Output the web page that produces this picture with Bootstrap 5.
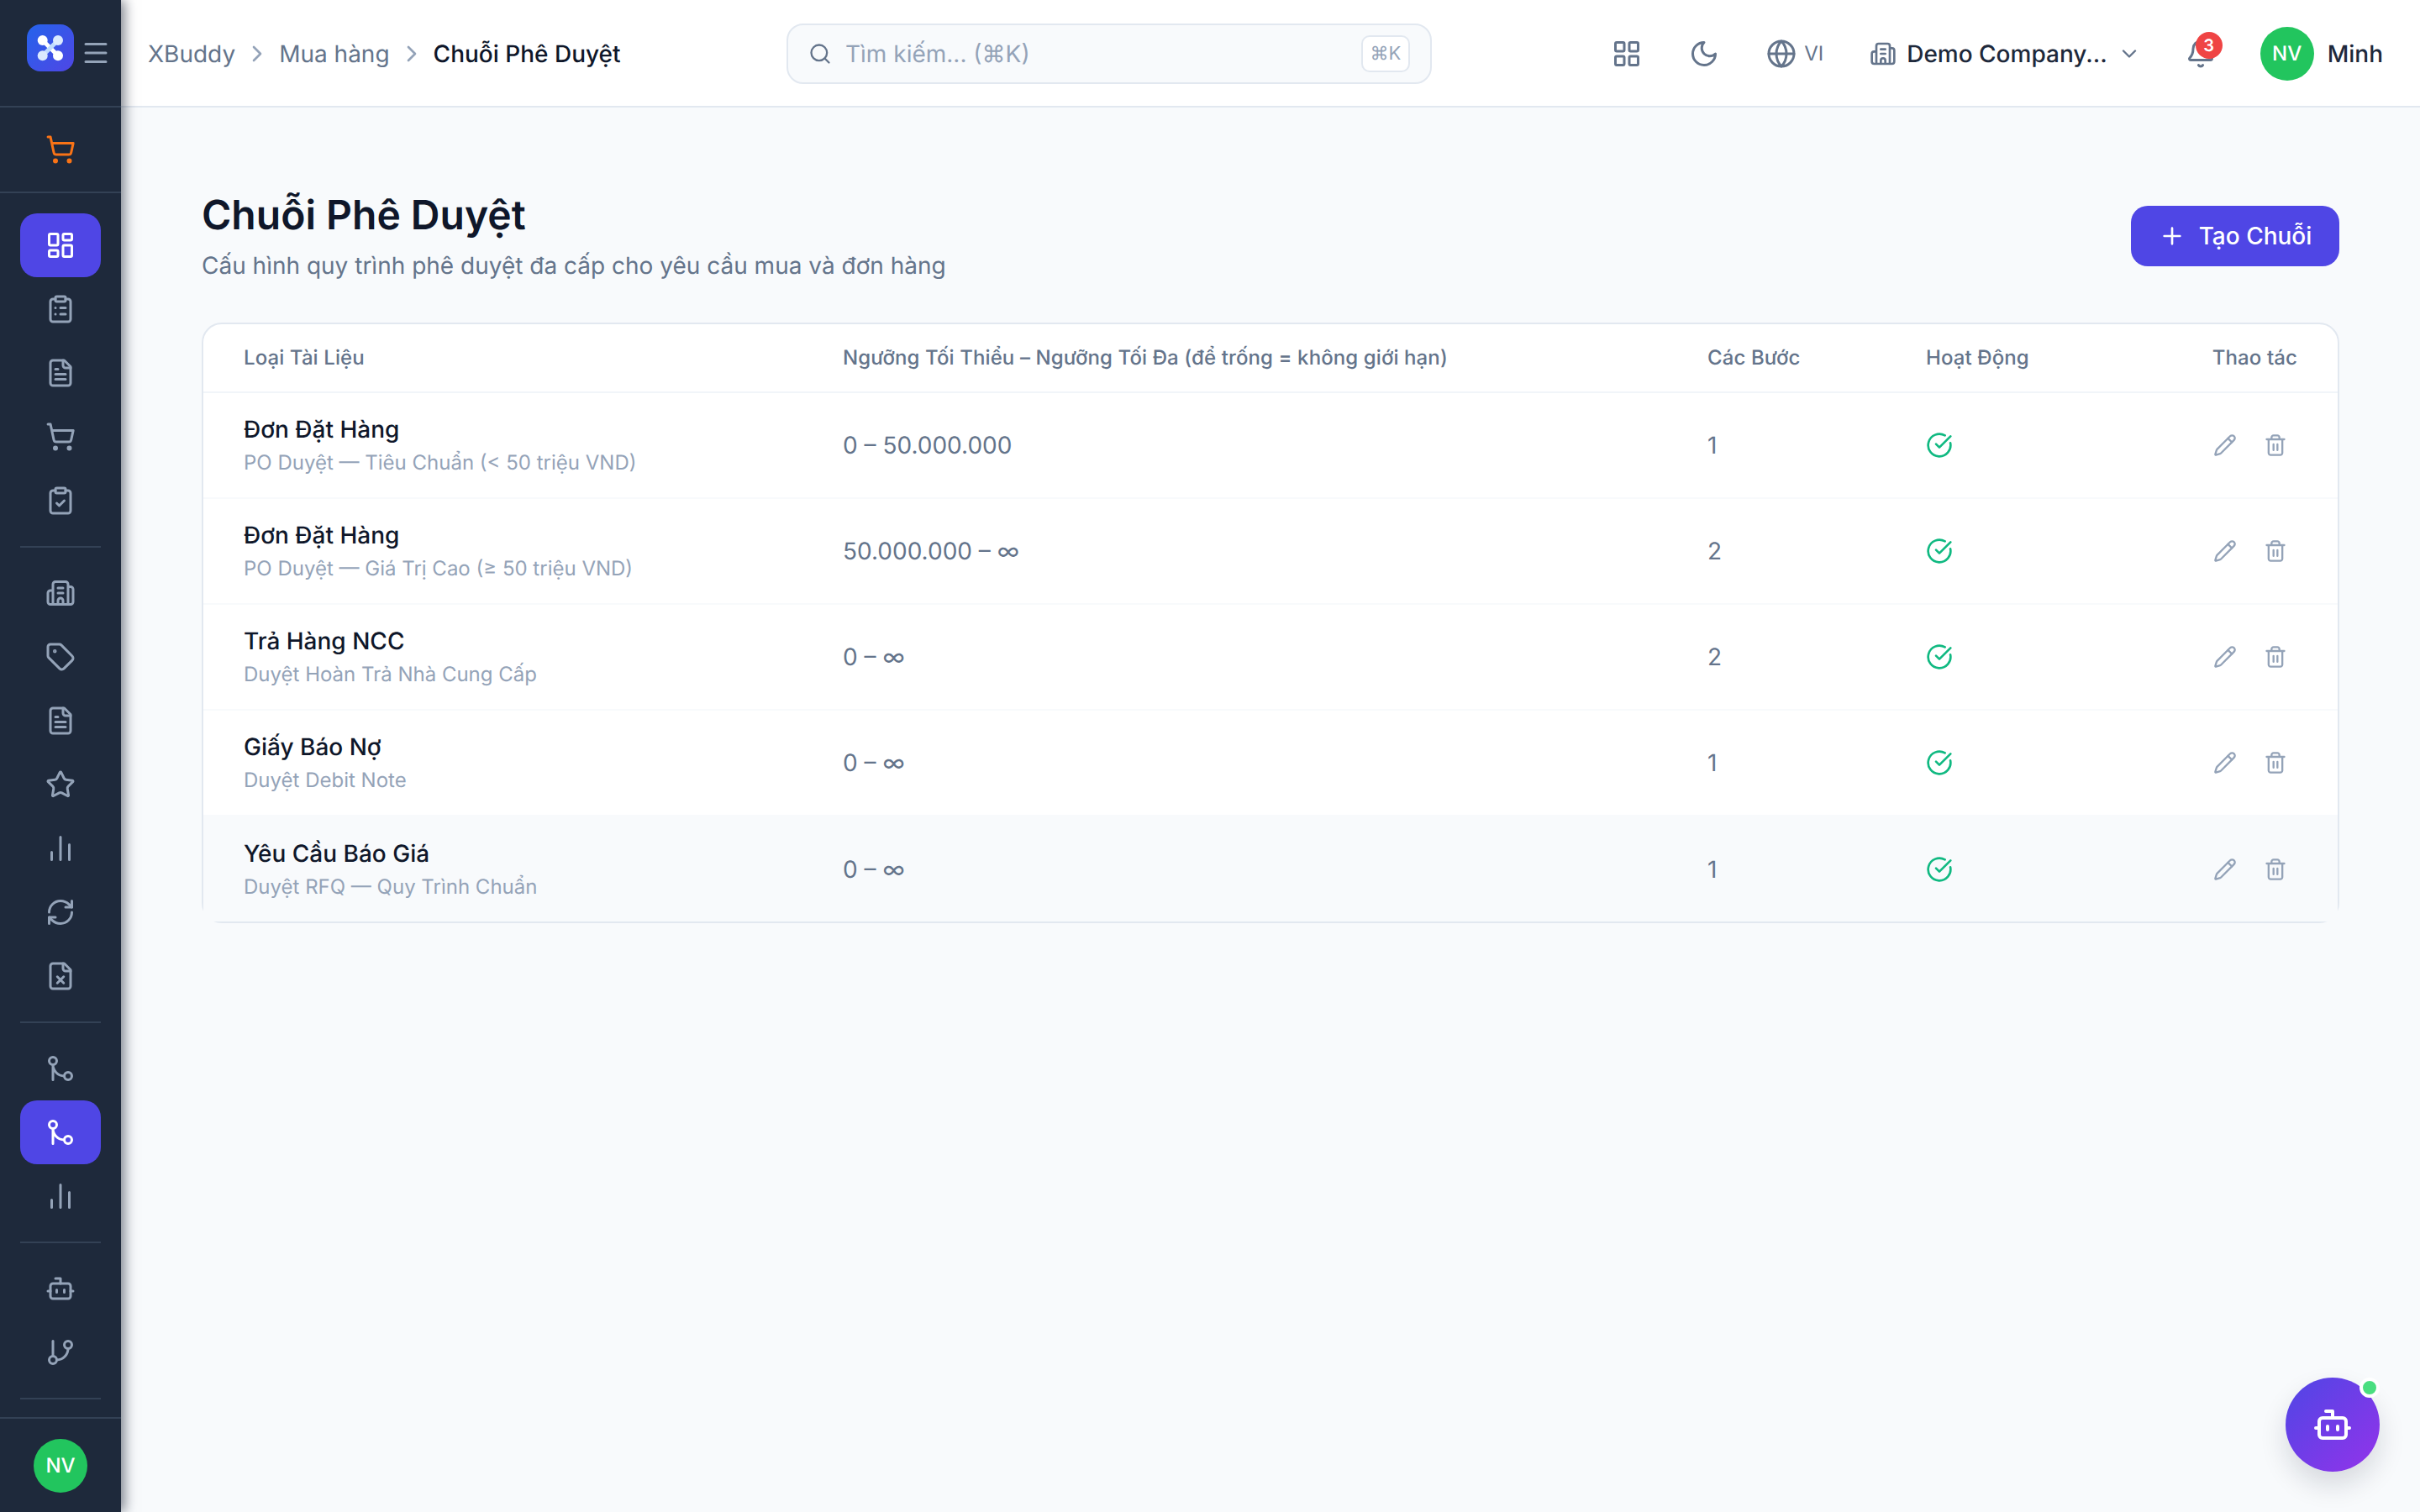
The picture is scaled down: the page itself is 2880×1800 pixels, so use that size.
<!DOCTYPE html>
<html lang="vi">
<head>
    <meta charset="UTF-8">
    <meta name="viewport" content="width=device-width, initial-scale=1.0">
    <title>Chuỗi Phê Duyệt</title>
    <link href="https://cdn.jsdelivr.net/npm/bootstrap@5.3.0/dist/css/bootstrap.min.css" rel="stylesheet">
    <style>
        body {
            font-family: Inter, "Noto Sans", sans-serif;
            text-rendering: geometricPrecision;
            background-color: #f8fafc;
            color: #0f172a;
            height: 1800px;
            overflow: hidden;
        }
        .ico {
            fill: none;
            stroke: currentColor;
            stroke-width: 2;
            stroke-linecap: round;
            stroke-linejoin: round;
            flex-shrink: 0;
        }
        .ico-36 { width: 36px; height: 36px; }
        .ico-32 { width: 32px; height: 32px; }
        .ico-28 { width: 28px; height: 28px; }

        /* sidebar */
        .side {
            width: 144px;
            height: 1800px;
            background-color: #1e293b;
            box-shadow: 4px 0 14px rgba(15, 23, 42, .55);
            z-index: 2;
            color: #94a3b8;
        }
        .side-head {
            height: 128px;
            padding-left: 32px;
            border-bottom: 2px solid #334155;
            gap: 8px;
        }
        .logo-box {
            width: 56px;
            height: 56px;
            margin-bottom: 12px;
            border-radius: 16px;
            background: linear-gradient(135deg, #2563eb, #4f46e5);
        }
        .side-quick {
            padding: 12px 24px;
            height: 102px;
            border-bottom: 2px solid #334155;
        }
        .side-nav { padding-top: 24px; }
        .side-link {
            width: 96px;
            height: 76px;
            margin: 0 24px;
            border-radius: 20px;
            color: #94a3b8;
        }
        .side-quick .side-link { margin: 0; color: #f97316; }
        .side-link.on { background-color: #4f46e5; color: #fff; }
        .side-sep {
            height: 2px;
            margin: 16px 24px;
            background-color: #334155;
        }
        .side-foot {
            position: absolute;
            left: 0;
            right: 0;
            bottom: 0;
            height: 113px;
            border-top: 2px solid #334155;
            padding-top: 24px;
        }
        .ava {
            width: 64px;
            height: 64px;
            border-radius: 50%;
            background-color: #22c55e;
            color: #fff;
            font-size: 24px;
            font-weight: 500;
        }

        /* top bar */
        .topbar {
            height: 128px;
            background-color: #fff;
            border-bottom: 2px solid #e2e8f0;
            padding: 2px 44px 0 32px;
        }
        .crumbs {
            font-size: 28px;
            color: #64748b;
            width: 760px;
            gap: 10px;
        }
        .crumbs .ico { color: #94a3b8; }
        .crumbs .cur { color: #0f172a; font-weight: 500; }
        .search-box {
            width: 768px;
            height: 72px;
            background-color: #f8fafc;
            border: 2px solid #e2e8f0;
            border-radius: 20px;
            padding: 0 24px;
            color: #94a3b8;
            font-size: 28px;
            gap: 16px;
        }
        .search-box .ico { color: #64748b; }
        .search-kbd {
            margin-left: auto;
            width: 58px;
            height: 44px;
            background-color: #fff;
            border: 2px solid #e2e8f0;
            border-radius: 10px;
            font-size: 22px;
        }
        .top-tools { color: #64748b; }
        .top-btn-grid { margin-right: 56px; }
        .top-btn-moon { margin-right: 56px; }
        .lang-txt { font-size: 24px; margin-left: 9px; margin-right: 55px; }
        .company {
            color: #1e293b;
            font-size: 28px;
            font-weight: 500;
            margin-right: 53px;
            gap: 12px;
        }
        .company .ico { color: #64748b; }
        .bell-wrap { margin-right: 53px; }
        .bell-count {
            position: absolute;
            top: -8px;
            right: -8px;
            width: 32px;
            height: 32px;
            border-radius: 50%;
            background-color: #ef4444;
            color: #fff;
            font-size: 20px;
            font-weight: 600;
        }
        .user-name { color: #1e293b; font-size: 28px; font-weight: 500; margin-left: 16px; }

        /* page */
        .page-body { padding: 96px 96px 0; }
        .page-title { font-size: 48px; font-weight: 600; line-height: 64px; margin: 0; color: #0f172a; }
        .page-sub { font-size: 28px; color: #64748b; line-height: 44px; margin: 6px 0 0; }
        .add-btn {
            width: 248px;
            height: 72px;
            background-color: #4f46e5;
            border: 0;
            border-radius: 20px;
            color: #fff;
            font-size: 28px;
            font-weight: 500;
            gap: 16px;
        }
        .chain-card {
            margin-top: 46px;
            background-color: #fff;
            border: 2px solid #e2e8f0;
            border-radius: 24px;
        }
        .chain-table { table-layout: fixed; width: 100%; margin: 0; }
        .chain-table th {
            height: 81px;
            padding: 0 48px;
            font-size: 24px;
            font-weight: 450;
            letter-spacing: .1px;
            color: #64748b;
            background: transparent;
            border-bottom: 2px solid #f1f5f9;
            vertical-align: middle;
            white-space: nowrap;
        }
        .chain-table td {
            height: 126px;
            padding: 0 48px;
            font-size: 28px;
            color: #64748b;
            border-bottom: 2px solid #f8fafc;
            vertical-align: middle;
            background: transparent;
        }
        .chain-table tr:last-child td { background-color: #f8fafc; border-bottom: 0; }
        .col-a { width: 713px; }
        .col-b { width: 1029px; }
        .col-c { width: 260px; }
        .col-d { width: 300px; }
        .doc-name { font-size: 28px; font-weight: 500; color: #0f172a; line-height: 40px; }
        .doc-note { font-size: 24px; color: #94a3b8; line-height: 36px; margin-top: 2px; }
        .ok-ico { color: #10b981; display: block; }
        .act-btn { padding: 12px; border: 0; background: none; color: #94a3b8; line-height: 0; }

        /* floating assistant */
        .bot-fab {
            position: fixed;
            left: 2720px;
            top: 1640px;
            width: 112px;
            height: 112px;
            border-radius: 50%;
            background: linear-gradient(135deg, #4f46e5, #9333ea);
            color: #fff;
            box-shadow: 0 16px 32px rgba(15, 23, 42, .14);
        }
        .bot-dot {
            position: absolute;
            top: 0;
            right: 0;
            width: 24px;
            height: 24px;
            border-radius: 50%;
            background-color: #4ade80;
            border: 4px solid #fff;
        }
        .bot-fab .ico { width: 48px; height: 48px; }
    </style>
</head>
<body>
    <svg width="0" height="0" class="position-absolute">
        <symbol id="i-menu" viewBox="0 0 24 24"><path d="M4 5h16M4 12h16M4 19h16"/></symbol>
        <symbol id="i-cart" viewBox="0 0 24 24"><circle cx="8" cy="21" r="1"/><circle cx="19" cy="21" r="1"/><path d="M2.05 2.05h2l2.66 12.42a2 2 0 0 0 2 1.58h9.78a2 2 0 0 0 1.95-1.57l1.65-7.43H5.12"/></symbol>
        <symbol id="i-dash" viewBox="0 0 24 24"><rect width="7" height="9" x="3" y="3" rx="1"/><rect width="7" height="5" x="14" y="3" rx="1"/><rect width="7" height="9" x="14" y="12" rx="1"/><rect width="7" height="5" x="3" y="16" rx="1"/></symbol>
        <symbol id="i-grid" viewBox="0 0 24 24"><rect width="7" height="7" x="3" y="3" rx="1"/><rect width="7" height="7" x="14" y="3" rx="1"/><rect width="7" height="7" x="14" y="14" rx="1"/><rect width="7" height="7" x="3" y="14" rx="1"/></symbol>
        <symbol id="i-clip-list" viewBox="0 0 24 24"><rect width="8" height="4" x="8" y="2" rx="1"/><path d="M16 4h2a2 2 0 0 1 2 2v14a2 2 0 0 1-2 2H6a2 2 0 0 1-2-2V6a2 2 0 0 1 2-2h2M12 11h4M12 16h4M8 11h.01M8 16h.01"/></symbol>
        <symbol id="i-clip-check" viewBox="0 0 24 24"><rect width="8" height="4" x="8" y="2" rx="1"/><path d="M16 4h2a2 2 0 0 1 2 2v14a2 2 0 0 1-2 2H6a2 2 0 0 1-2-2V6a2 2 0 0 1 2-2h2M9 14l2 2 4-4"/></symbol>
        <symbol id="i-file" viewBox="0 0 24 24"><path d="M15 2H6a2 2 0 0 0-2 2v16a2 2 0 0 0 2 2h12a2 2 0 0 0 2-2V7Z"/><path d="M14 2v4a2 2 0 0 0 2 2h4M10 9H8M16 13H8M16 17H8"/></symbol>
        <symbol id="i-file-x" viewBox="0 0 24 24"><path d="M15 2H6a2 2 0 0 0-2 2v16a2 2 0 0 0 2 2h12a2 2 0 0 0 2-2V7Z"/><path d="M14 2v4a2 2 0 0 0 2 2h4M14.5 12.5l-5 5M9.5 12.5l5 5"/></symbol>
        <symbol id="i-building" viewBox="0 0 24 24"><path d="M10 12h4M10 8h4M14 21v-3a2 2 0 0 0-4 0v3M6 10H4a2 2 0 0 0-2 2v7a2 2 0 0 0 2 2h16a2 2 0 0 0 2-2V9a2 2 0 0 0-2-2h-2M6 21V5a2 2 0 0 1 2-2h8a2 2 0 0 1 2 2v16"/></symbol>
        <symbol id="i-tag" viewBox="0 0 24 24"><path d="M12.586 2.586A2 2 0 0 0 11.172 2H4a2 2 0 0 0-2 2v7.172a2 2 0 0 0 .586 1.414l8.704 8.704a2.426 2.426 0 0 0 3.42 0l6.58-6.58a2.426 2.426 0 0 0 0-3.42z"/><circle cx="7.5" cy="7.5" r=".5" fill="currentColor"/></symbol>
        <symbol id="i-star" viewBox="0 0 24 24"><path d="M11.525 2.295a.53.53 0 0 1 .95 0l2.31 4.679a2.123 2.123 0 0 0 1.595 1.16l5.166.756a.53.53 0 0 1 .294.904l-3.736 3.638a2.123 2.123 0 0 0-.611 1.878l.882 5.14a.53.53 0 0 1-.771.56l-4.618-2.428a2.122 2.122 0 0 0-1.973 0L6.396 21.01a.53.53 0 0 1-.77-.56l.881-5.139a2.122 2.122 0 0 0-.611-1.879L2.16 9.795a.53.53 0 0 1 .294-.906l5.165-.755a2.122 2.122 0 0 0 1.597-1.16z"/></symbol>
        <symbol id="i-bars" viewBox="0 0 24 24"><path d="M5 21v-6M12 21V3M19 21V9"/></symbol>
        <symbol id="i-refresh" viewBox="0 0 24 24"><path d="M3 12a9 9 0 0 1 9-9 9.75 9.75 0 0 1 6.74 2.74L21 8"/><path d="M21 3v5h-5M21 12a9 9 0 0 1-9 9 9.75 9.75 0 0 1-6.74-2.74L3 16"/><path d="M8 16H3v5"/></symbol>
        <symbol id="i-merge" viewBox="0 0 24 24"><circle cx="18" cy="18" r="3"/><circle cx="6" cy="6" r="3"/><path d="M6 21V9a9 9 0 0 0 9 9"/></symbol>
        <symbol id="i-branch" viewBox="0 0 24 24"><path d="M6 3v12"/><circle cx="18" cy="6" r="3"/><circle cx="6" cy="18" r="3"/><path d="M18 9a9 9 0 0 1-9 9"/></symbol>
        <symbol id="i-bot" viewBox="0 0 24 24"><path d="M12 8V4H8"/><rect width="16" height="12" x="4" y="8" rx="2"/><path d="M2 14h2M20 14h2M15 13v2M9 13v2"/></symbol>
        <symbol id="i-chev-r" viewBox="0 0 24 24"><path d="m9 18 6-6-6-6"/></symbol>
        <symbol id="i-chev-d" viewBox="0 0 24 24"><path d="m6 9 6 6 6-6"/></symbol>
        <symbol id="i-search" viewBox="0 0 24 24"><circle cx="11" cy="11" r="8"/><path d="m21 21-4.3-4.3"/></symbol>
        <symbol id="i-moon" viewBox="0 0 24 24"><path d="M12 3a6 6 0 0 0 9 9 9 9 0 1 1-9-9Z"/></symbol>
        <symbol id="i-globe" viewBox="0 0 24 24"><circle cx="12" cy="12" r="10"/><path d="M12 2a14.5 14.5 0 0 0 0 20 14.5 14.5 0 0 0 0-20M2 12h20"/></symbol>
        <symbol id="i-bell" viewBox="0 0 24 24"><path d="M10.268 21a2 2 0 0 0 3.464 0"/><path d="M3.262 15.326A1 1 0 0 0 4 17h16a1 1 0 0 0 .74-1.673C19.41 13.956 18 12.499 18 8A6 6 0 0 0 6 8c0 4.499-1.411 5.956-2.738 7.326"/></symbol>
        <symbol id="i-plus" viewBox="0 0 24 24"><path d="M5 12h14M12 5v14"/></symbol>
        <symbol id="i-check" viewBox="0 0 24 24"><path d="M21.801 10A10 10 0 1 1 17 3.335"/><path d="m9 11 3 3L22 4"/></symbol>
        <symbol id="i-pencil" viewBox="0 0 24 24"><path d="M21.174 6.812a1 1 0 0 0-3.986-3.987L3.842 16.174a2 2 0 0 0-.5.83l-1.321 4.352a.5.5 0 0 0 .623.622l4.353-1.32a2 2 0 0 0 .83-.497z"/><path d="m15 5 4 4"/></symbol>
        <symbol id="i-trash" viewBox="0 0 24 24"><path d="M3 6h18M19 6v14c0 1-1 2-2 2H7c-1 0-2-1-2-2V6M8 6V4c0-1 1-2 2-2h4c1 0 2 1 2 2v2M10 11v6M14 11v6"/></symbol>
    </svg>

    <div class="d-flex">
        <aside class="side position-relative flex-shrink-0">
            <div class="side-head d-flex align-items-center">
                <div class="logo-box d-flex align-items-center justify-content-center">
                    <svg width="40" height="40" viewBox="0 0 40 40">
                        <path d="M10.7 11L29 29.3" stroke="#fff" stroke-width="5"/>
                        <circle cx="10.7" cy="11" r="6" fill="#fff"/>
                        <circle cx="29" cy="29.3" r="6" fill="#fff"/>
                        <path d="M29 11L10.7 29.3" stroke="#bfdbfe" stroke-width="5"/>
                        <circle cx="29" cy="11" r="6" fill="#dbeafe"/>
                        <circle cx="10.7" cy="29.3" r="6" fill="#dbeafe"/>
                    </svg>
                </div>
                <svg class="ico ico-36"><use href="#i-menu"/></svg>
            </div>
            <div class="side-quick">
                <a href="#" class="side-link d-flex align-items-center justify-content-center"><svg class="ico ico-36"><use href="#i-cart"/></svg></a>
            </div>
            <nav class="side-nav">
                <a href="#" class="side-link on d-flex align-items-center justify-content-center"><svg class="ico ico-36"><use href="#i-dash"/></svg></a>
                <a href="#" class="side-link d-flex align-items-center justify-content-center"><svg class="ico ico-36"><use href="#i-clip-list"/></svg></a>
                <a href="#" class="side-link d-flex align-items-center justify-content-center"><svg class="ico ico-36"><use href="#i-file"/></svg></a>
                <a href="#" class="side-link d-flex align-items-center justify-content-center"><svg class="ico ico-36"><use href="#i-cart"/></svg></a>
                <a href="#" class="side-link d-flex align-items-center justify-content-center"><svg class="ico ico-36"><use href="#i-clip-check"/></svg></a>
                <div class="side-sep"></div>
                <a href="#" class="side-link d-flex align-items-center justify-content-center"><svg class="ico ico-36"><use href="#i-building"/></svg></a>
                <a href="#" class="side-link d-flex align-items-center justify-content-center"><svg class="ico ico-36"><use href="#i-tag"/></svg></a>
                <a href="#" class="side-link d-flex align-items-center justify-content-center"><svg class="ico ico-36"><use href="#i-file"/></svg></a>
                <a href="#" class="side-link d-flex align-items-center justify-content-center"><svg class="ico ico-36"><use href="#i-star"/></svg></a>
                <a href="#" class="side-link d-flex align-items-center justify-content-center"><svg class="ico ico-36"><use href="#i-bars"/></svg></a>
                <a href="#" class="side-link d-flex align-items-center justify-content-center"><svg class="ico ico-36"><use href="#i-refresh"/></svg></a>
                <a href="#" class="side-link d-flex align-items-center justify-content-center"><svg class="ico ico-36"><use href="#i-file-x"/></svg></a>
                <div class="side-sep"></div>
                <a href="#" class="side-link d-flex align-items-center justify-content-center"><svg class="ico ico-36"><use href="#i-merge"/></svg></a>
                <a href="#" class="side-link on d-flex align-items-center justify-content-center"><svg class="ico ico-36"><use href="#i-merge"/></svg></a>
                <a href="#" class="side-link d-flex align-items-center justify-content-center"><svg class="ico ico-36"><use href="#i-bars"/></svg></a>
                <div class="side-sep"></div>
                <a href="#" class="side-link d-flex align-items-center justify-content-center"><svg class="ico ico-36"><use href="#i-bot"/></svg></a>
                <a href="#" class="side-link d-flex align-items-center justify-content-center"><svg class="ico ico-36"><use href="#i-branch"/></svg></a>
                <div class="side-sep"></div>
            </nav>
            <div class="side-foot d-flex justify-content-center">
                <div class="ava d-flex align-items-center justify-content-center">NV</div>
            </div>
        </aside>

        <div class="flex-grow-1">
            <header class="topbar d-flex align-items-center">
                <div class="crumbs d-flex align-items-center">
                    <span>XBuddy</span>
                    <svg class="ico ico-32"><use href="#i-chev-r"/></svg>
                    <span>Mua hàng</span>
                    <svg class="ico ico-32"><use href="#i-chev-r"/></svg>
                    <span class="cur">Chuỗi Phê Duyệt</span>
                </div>
                <div class="search-box d-flex align-items-center">
                    <svg class="ico ico-28"><use href="#i-search"/></svg>
                    <span>Tìm kiếm... (⌘K)</span>
                    <span class="search-kbd d-flex align-items-center justify-content-center">⌘K</span>
                </div>
                <div class="top-tools d-flex align-items-center ms-auto">
                    <svg class="ico ico-36 top-btn-grid"><use href="#i-grid"/></svg>
                    <svg class="ico ico-36 top-btn-moon"><use href="#i-moon"/></svg>
                    <svg class="ico ico-36"><use href="#i-globe"/></svg>
                    <span class="lang-txt">VI</span>
                    <div class="company d-flex align-items-center">
                        <svg class="ico ico-32"><use href="#i-building"/></svg>
                        <span>Demo Company...</span>
                        <svg class="ico ico-28"><use href="#i-chev-d"/></svg>
                    </div>
                    <div class="bell-wrap position-relative d-flex">
                        <svg class="ico ico-36"><use href="#i-bell"/></svg>
                        <span class="bell-count d-flex align-items-center justify-content-center">3</span>
                    </div>
                    <div class="ava d-flex align-items-center justify-content-center">NV</div>
                    <span class="user-name">Minh</span>
                </div>
            </header>

            <main class="page-body">
                <div class="d-flex justify-content-between align-items-center">
                    <div>
                        <h1 class="page-title">Chuỗi Phê Duyệt</h1>
                        <p class="page-sub">Cấu hình quy trình phê duyệt đa cấp cho yêu cầu mua và đơn hàng</p>
                    </div>
                    <button class="add-btn d-flex align-items-center justify-content-center" type="button">
                        <svg class="ico ico-32"><use href="#i-plus"/></svg>
                        <span>Tạo Chuỗi</span>
                    </button>
                </div>

                <div class="chain-card">
                    <table class="table chain-table">
                        <colgroup><col class="col-a"><col class="col-b"><col class="col-c"><col class="col-d"><col></colgroup>
                        <thead>
                            <tr>
                                <th>Loại Tài Liệu</th>
                                <th>Ngưỡng Tối Thiểu – Ngưỡng Tối Đa (để trống = không giới hạn)</th>
                                <th>Các Bước</th>
                                <th>Hoạt Động</th>
                                <th class="text-end">Thao tác</th>
                            </tr>
                        </thead>
                        <tbody>
                            <tr>
                                <td><div class="doc-name">Đơn Đặt Hàng</div><div class="doc-note">PO Duyệt — Tiêu Chuẩn (&lt; 50 triệu VND)</div></td>
                                <td>0 – 50.000.000</td>
                                <td>1</td>
                                <td><svg class="ico ico-32 ok-ico"><use href="#i-check"/></svg></td>
                                <td><div class="d-flex justify-content-end gap-2"><button class="act-btn" type="button"><svg class="ico ico-28"><use href="#i-pencil"/></svg></button><button class="act-btn" type="button"><svg class="ico ico-28"><use href="#i-trash"/></svg></button></div></td>
                            </tr>
                            <tr>
                                <td><div class="doc-name">Đơn Đặt Hàng</div><div class="doc-note">PO Duyệt — Giá Trị Cao (≥ 50 triệu VND)</div></td>
                                <td>50.000.000 – ∞</td>
                                <td>2</td>
                                <td><svg class="ico ico-32 ok-ico"><use href="#i-check"/></svg></td>
                                <td><div class="d-flex justify-content-end gap-2"><button class="act-btn" type="button"><svg class="ico ico-28"><use href="#i-pencil"/></svg></button><button class="act-btn" type="button"><svg class="ico ico-28"><use href="#i-trash"/></svg></button></div></td>
                            </tr>
                            <tr>
                                <td><div class="doc-name">Trả Hàng NCC</div><div class="doc-note">Duyệt Hoàn Trả Nhà Cung Cấp</div></td>
                                <td>0 – ∞</td>
                                <td>2</td>
                                <td><svg class="ico ico-32 ok-ico"><use href="#i-check"/></svg></td>
                                <td><div class="d-flex justify-content-end gap-2"><button class="act-btn" type="button"><svg class="ico ico-28"><use href="#i-pencil"/></svg></button><button class="act-btn" type="button"><svg class="ico ico-28"><use href="#i-trash"/></svg></button></div></td>
                            </tr>
                            <tr>
                                <td><div class="doc-name">Giấy Báo Nợ</div><div class="doc-note">Duyệt Debit Note</div></td>
                                <td>0 – ∞</td>
                                <td>1</td>
                                <td><svg class="ico ico-32 ok-ico"><use href="#i-check"/></svg></td>
                                <td><div class="d-flex justify-content-end gap-2"><button class="act-btn" type="button"><svg class="ico ico-28"><use href="#i-pencil"/></svg></button><button class="act-btn" type="button"><svg class="ico ico-28"><use href="#i-trash"/></svg></button></div></td>
                            </tr>
                            <tr>
                                <td><div class="doc-name">Yêu Cầu Báo Giá</div><div class="doc-note">Duyệt RFQ — Quy Trình Chuẩn</div></td>
                                <td>0 – ∞</td>
                                <td>1</td>
                                <td><svg class="ico ico-32 ok-ico"><use href="#i-check"/></svg></td>
                                <td><div class="d-flex justify-content-end gap-2"><button class="act-btn" type="button"><svg class="ico ico-28"><use href="#i-pencil"/></svg></button><button class="act-btn" type="button"><svg class="ico ico-28"><use href="#i-trash"/></svg></button></div></td>
                            </tr>
                        </tbody>
                    </table>
                </div>
            </main>
        </div>
    </div>

    <a href="#" class="bot-fab d-flex align-items-center justify-content-center">
        <svg class="ico"><use href="#i-bot"/></svg>
        <span class="bot-dot"></span>
    </a>
</body>
</html>
